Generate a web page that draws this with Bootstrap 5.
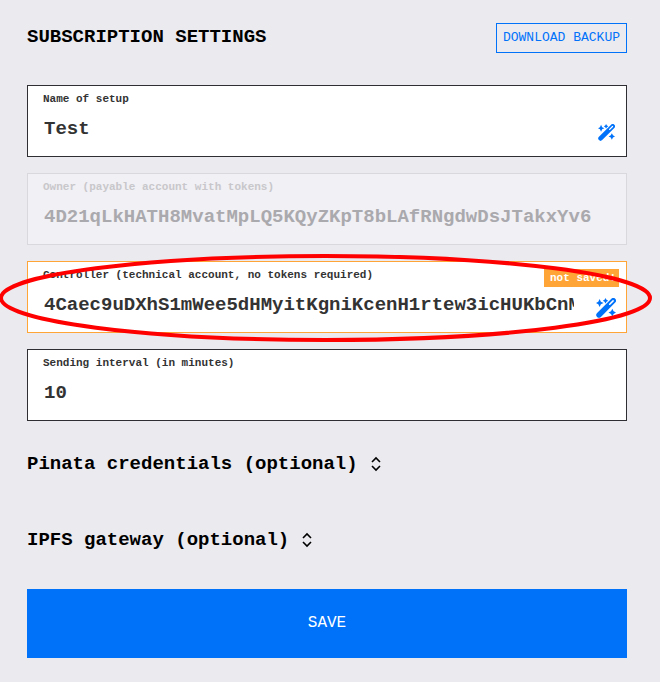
<!DOCTYPE html>
<html lang="en">
<head>
<meta charset="utf-8">
<meta name="viewport" content="width=device-width, initial-scale=1">
<title>Subscription settings</title>
<link rel="stylesheet" href="https://cdn.jsdelivr.net/npm/bootstrap@5.3.0/dist/css/bootstrap.min.css">
<style>
body {
  background: #ebeaef;
  color: #000;
  font-family: "Liberation Mono", monospace;
  overflow-x: hidden;
}
.settings { padding: 23px 33px 24px 27px; }
.settings-title, .section-toggle { font-size: 19px; line-height: 28px; font-weight: 700; }
.btn-backup {
  --bs-btn-color: #0072fa;
  --bs-btn-border-color: #0072fa;
  --bs-btn-font-size: 13px;
  --bs-btn-padding-x: 6px;
  --bs-btn-padding-y: 4px;
  line-height: 20px;
}
.fields { margin-top: 32px; }
.field {
  background: #fff;
  border: 1px solid #2f2f33;
  color: #333;
  padding: 5px 0 5px 15px;
}
.field label { font-size: 11px; line-height: 16px; font-weight: 700; }
.field input {
  height: 44px;
  min-width: 0;
  padding: 0 0 0 1px;
  border: 0;
  outline: 0;
  background: transparent;
  color: #333;
  font-size: 19px;
  font-weight: 700;
}
.field-locked { background: #f1f0f4; border-color: #d9d8dc; }
.field-locked label { color: #c8c7cb; }
.field-locked input { color: #aaa9ad; }
.field-changed { border-color: #ffa436; }
.tag-unsaved {
  top: 7px;
  right: 7px;
  padding: 1px 3px 1px 6px;
  background: #ffa436;
  color: #fff;
  font-size: 11px;
  line-height: 16px;
  font-weight: 700;
}
.btn-wand {
  --bs-btn-color: #0072fa;
  --bs-btn-hover-color: #0059c4;
  --bs-btn-padding-x: 0;
  --bs-btn-padding-y: 0;
  width: 40px;
  margin-left: 12px;
  padding-top: 7px;
}
.callout-ring {
  top: -6px;
  right: -24px;
  bottom: -8px;
  left: -27px;
  pointer-events: none;
  z-index: 2;
}
.sections { gap: 48px; padding: 29px 0 35px; }
.section-toggle { --bs-btn-color: #000; gap: 10px; }
.btn-save {
  --bs-btn-color: #fff;
  --bs-btn-bg: #0072fa;
  --bs-btn-hover-color: #fff;
  --bs-btn-hover-bg: #0063da;
  --bs-btn-font-size: 16px;
  padding: 20px;
  line-height: 29px;
}
</style>
<script src="https://cdn.jsdelivr.net/npm/bootstrap@5.3.0/dist/js/bootstrap.bundle.min.js"></script>
</head>
<body>
<svg class="d-none" aria-hidden="true">
  <symbol id="wand" viewBox="0 0 20 20">
    <path d="M3 17 17.300 2.700" fill="none" stroke="currentColor" stroke-width="5.400" stroke-linecap="round"/>
    <path d="M13.700 6.300 17.100 2.900" fill="none" stroke="#fff" stroke-width="1.500" stroke-linecap="round"/>
    <path fill="currentColor" d="M3.600 1 4.900 3.700 7.600 5 4.900 6.300 3.600 9 2.300 6.300 0 5 2.300 3.700ZM9.500 0 10.500 1.700 12.200 2.700 10.500 3.700 9.500 5.400 8.500 3.700 6.800 2.700 8.500 1.700ZM16.300 10.800 17.600 13.300 20 14.600 17.600 15.900 16.300 18.400 15 15.900 12.500 14.600 15 13.300Z"/>
  </symbol>
  <symbol id="expand" viewBox="0 0 16 16">
    <path d="M4 6 8 2 12 6M4 10 8 14 12 10" fill="none" stroke="currentColor" stroke-width="1.600"/>
  </symbol>
</svg>

<main class="settings">
  <header class="d-flex align-items-start justify-content-between">
    <h1 class="settings-title mb-0">SUBSCRIPTION SETTINGS</h1>
    <button type="button" class="btn btn-backup rounded-0">DOWNLOAD BACKUP</button>
  </header>

  <form>
    <div class="fields d-flex flex-column gap-3">
      <div class="field">
        <label class="d-block" for="setup-name">Name of setup</label>
        <div class="d-flex">
          <input class="flex-grow-1" id="setup-name" type="text" value="Test">
          <button type="button" class="btn btn-wand" aria-label="Edit name"><svg width="17" height="17" aria-hidden="true"><use href="#wand"/></svg></button>
        </div>
      </div>

      <div class="field field-locked">
        <label class="d-block" for="owner">Owner (payable account with tokens)</label>
        <div class="d-flex">
          <input class="flex-grow-1" id="owner" type="text" value="4D21qLkHATH8MvatMpLQ5KQyZKpT8bLAfRNgdwDsJTakxYv6" disabled>
        </div>
      </div>

      <div class="field field-changed position-relative">
        <label class="d-block" for="controller">Controller (technical account, no tokens required)</label>
        <span class="tag-unsaved position-absolute">not saved!</span>
        <div class="d-flex">
          <input class="flex-grow-1" id="controller" type="text" value="4Caec9uDXhS1mWee5dHMyitKgniKcenH1rtew3icHUKbCnM">
          <button type="button" class="btn btn-wand" aria-label="Edit controller"><svg width="20" height="20" aria-hidden="true"><use href="#wand"/></svg></button>
        </div>
        <div class="callout-ring position-absolute">
          <svg class="d-block w-100 h-100 overflow-visible" aria-hidden="true"><ellipse cx="50%" cy="50%" rx="50%" ry="50%" fill="none" stroke="#f00" stroke-width="4"/></svg>
        </div>
      </div>

      <div class="field">
        <label class="d-block" for="interval">Sending interval (in minutes)</label>
        <div class="d-flex">
          <input class="flex-grow-1" id="interval" type="text" inputmode="numeric" value="10">
        </div>
      </div>
    </div>

    <div class="sections d-flex flex-column align-items-start">
      <button type="button" class="btn section-toggle d-flex align-items-center p-0 border-0" aria-expanded="false">Pinata credentials (optional)<svg width="16" height="16" aria-hidden="true"><use href="#expand"/></svg></button>
      <button type="button" class="btn section-toggle d-flex align-items-center p-0 border-0" aria-expanded="false">IPFS gateway (optional)<svg width="16" height="16" aria-hidden="true"><use href="#expand"/></svg></button>
    </div>

    <button type="submit" class="btn btn-save d-block w-100 rounded-0 border-0">SAVE</button>
  </form>
</main>
</body>
</html>
